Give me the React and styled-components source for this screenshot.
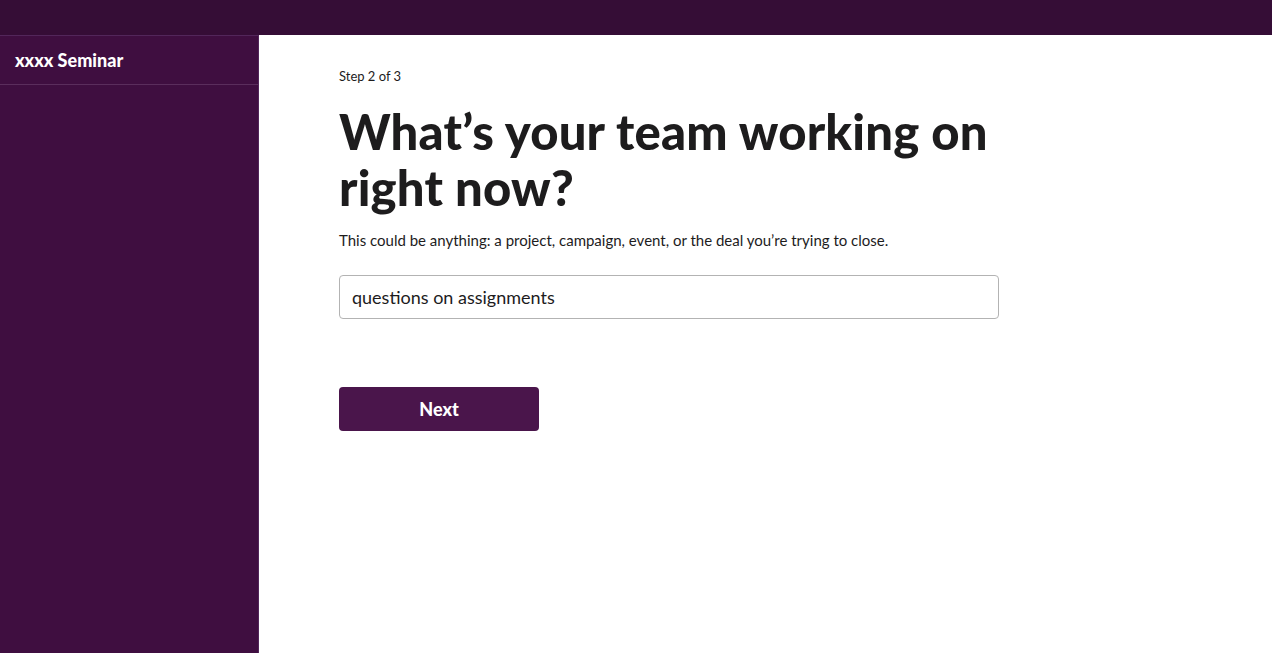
import React, { useState } from 'react';
import styled, { createGlobalStyle } from 'styled-components';

const GlobalStyle = createGlobalStyle`
  html, body {
    margin: 0;
    padding: 0;
    height: 100%;
    font-family: Lato, "Liberation Sans", sans-serif;
    color: #1d1c1d;
  }
  #root { height: 100%; }
`;

const Page = styled.div`
  display: flex;
  flex-direction: column;
  height: 100vh;
`;

const TopBar = styled.div`
  height: 35px;
  flex-shrink: 0;
  background: #350d36;
`;

const Body = styled.div`
  display: flex;
  flex: 1;
  min-height: 0;
`;

const Sidebar = styled.nav`
  width: 258px;
  flex-shrink: 0;
  background: #3f0e40;
  border-right: 1px solid #52265a;
  border-top: 1px solid #52265a;
`;

const WorkspaceName = styled.div`
  height: 48px;
  display: flex;
  align-items: center;
  padding: 0 15px;
  border-bottom: 1px solid #5a2d5c;
  color: #fff;
  font-size: 18px;
  font-weight: 900;
`;

const Main = styled.main`
  flex: 1;
  background: #fff;
  padding: 32px 80px 0;
`;

const Content = styled.div`
  width: 660px;
`;

const Step = styled.div`
  font-size: 13px;
  line-height: 18px;
  color: #1d1c1d;
`;

const Heading = styled.h1`
  margin: 18px 0 0;
  font-family: Lato, "Liberation Sans", sans-serif;
  font-weight: 900;
  font-size: 49px;
  line-height: 56px;
  letter-spacing: 0.2px;
  color: #1d1c1d;
`;

const Description = styled.p`
  margin: 14px 0 0;
  font-size: 15px;
  line-height: 22px;
`;

const Input = styled.input`
  display: block;
  box-sizing: border-box;
  width: 660px;
  height: 44px;
  margin-top: 24px;
  padding: 0 12px;
  border: 1px solid #b3b3b3;
  border-radius: 4px;
  font-family: Lato, "Liberation Sans", sans-serif;
  font-size: 18px;
  color: #1d1c1d;
  outline: none;
`;

const NextButton = styled.button`
  display: block;
  width: 200px;
  height: 44px;
  margin-top: 68px;
  border: none;
  border-radius: 4px;
  background: #4a154b;
  color: #fff;
  font-family: Lato, "Liberation Sans", sans-serif;
  font-size: 18px;
  font-weight: 900;
  cursor: pointer;
`;

export default function App() {
  const [value, setValue] = useState('questions on assignments');
  return (
    <>
      <GlobalStyle />
      <Page>
        <TopBar />
        <Body>
          <Sidebar>
            <WorkspaceName>xxxx Seminar</WorkspaceName>
          </Sidebar>
          <Main>
            <Content>
              <Step>Step 2 of 3</Step>
              <Heading>What’s your team working on right now?</Heading>
              <Description>
                This could be anything: a project, campaign, event, or the deal you’re trying to close.
              </Description>
              <Input value={value} onChange={(e) => setValue(e.target.value)} />
              <NextButton>Next</NextButton>
            </Content>
          </Main>
        </Body>
      </Page>
    </>
  );
}
